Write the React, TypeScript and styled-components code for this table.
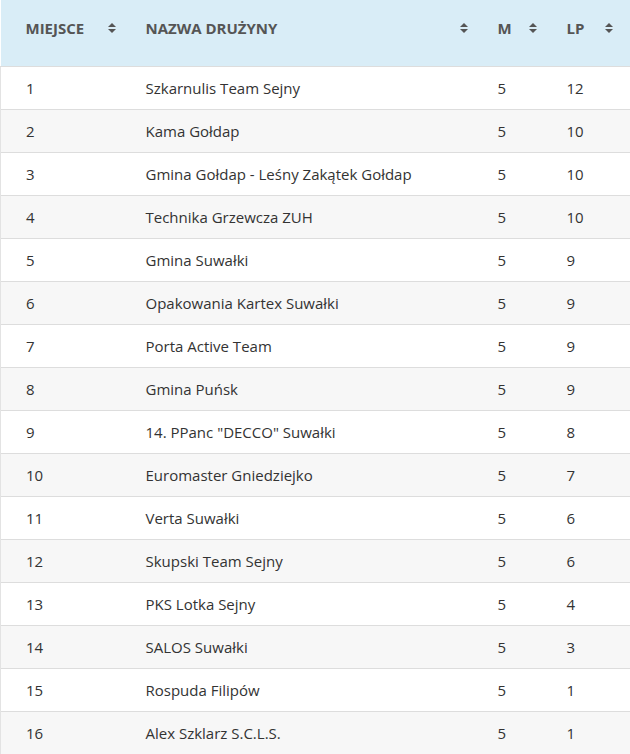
import React from "react";
import styled, { createGlobalStyle } from "styled-components";

const GlobalStyle = createGlobalStyle`
  html, body {
    margin: 0;
    padding: 0;
    background: #ffffff;
    font-family: "Open Sans", "Liberation Sans", Arial, sans-serif;
  }
`;

const Table = styled.table`
  width: 630px;
  border-collapse: collapse;
  table-layout: fixed;
  font-family: "Open Sans", "Liberation Sans", Arial, sans-serif;
  font-size: 15px;
  line-height: 20px;
  color: #333333;
`;

const HeadRow = styled.tr`
  background: #d9edf7;
`;

const Th = styled.th<{ $width?: number; $last?: boolean }>`
  width: ${(p) => (p.$width ? `${p.$width}px` : "auto")};
  height: 66px;
  box-sizing: border-box;
  padding: 18px ${(p) => (p.$last ? 17 : 5)}px 28px 25px;
  text-align: left;
  vertical-align: top;
  font-size: 15px;
  font-weight: 700;
  text-transform: uppercase;
  color: #555555;
  border-bottom: 1px solid #dddddd;
`;

const HeadInner = styled.div`
  display: flex;
  align-items: center;
  justify-content: space-between;
  height: 20px;
`;

const SortIcon = styled.svg`
  width: 8px;
  height: 10px;
  flex: none;
  fill: #555555;
`;

const Row = styled.tr<{ $striped: boolean }>`
  background: ${(p) => (p.$striped ? "#f7f7f7" : "#ffffff")};
`;

const Td = styled.td<{ $first?: boolean }>`
  height: 42px;
  box-sizing: border-box;
  padding: 11px 25px 11px 25px;
  border-top: 1px solid #dddddd;
  border-left: ${(p) => (p.$first ? "1px solid #e3e3e3" : "none")};
  vertical-align: middle;
  white-space: nowrap;
`;

const Sort = () => (
  <SortIcon viewBox="0 0 8 10">
    <path d="M4 0 L8 4 L0 4 Z" />
    <path d="M0 6 L8 6 L4 10 Z" />
  </SortIcon>
);

const teams: [string, number][] = [
  ["Szkarnulis Team Sejny", 12],
  ["Kama Gołdap", 10],
  ["Gmina Gołdap - Leśny Zakątek Gołdap", 10],
  ["Technika Grzewcza ZUH", 10],
  ["Gmina Suwałki", 9],
  ["Opakowania Kartex Suwałki", 9],
  ["Porta Active Team", 9],
  ["Gmina Puńsk", 9],
  ['14. PPanc "DECCO" Suwałki', 8],
  ["Euromaster Gniedziejko", 7],
  ["Verta Suwałki", 6],
  ["Skupski Team Sejny", 6],
  ["PKS Lotka Sejny", 4],
  ["SALOS Suwałki", 3],
  ["Rospuda Filipów", 1],
  ["Alex Szklarz S.C.L.S.", 1],
];

export default function App() {
  return (
    <>
      <GlobalStyle />
      <Table>
        <thead>
          <HeadRow>
            <Th $width={120}>
              <HeadInner>
                <span>Miejsce</span>
                <Sort />
              </HeadInner>
            </Th>
            <Th $width={352}>
              <HeadInner>
                <span>Nazwa drużyny</span>
                <Sort />
              </HeadInner>
            </Th>
            <Th $width={69}>
              <HeadInner>
                <span>M</span>
                <Sort />
              </HeadInner>
            </Th>
            <Th $last>
              <HeadInner>
                <span>LP</span>
                <Sort />
              </HeadInner>
            </Th>
          </HeadRow>
        </thead>
        <tbody>
          {teams.map(([name, pts], i) => (
            <Row key={i} $striped={i % 2 === 1}>
              <Td $first>{i + 1}</Td>
              <Td>{name}</Td>
              <Td>5</Td>
              <Td>{pts}</Td>
            </Row>
          ))}
        </tbody>
      </Table>
    </>
  );
}
